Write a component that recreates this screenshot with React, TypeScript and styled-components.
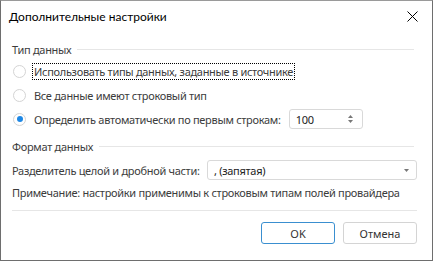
import React, {useState} from 'react';
import styled, {createGlobalStyle} from 'styled-components';

const GlobalStyle = createGlobalStyle`
  html, body {
    margin: 0;
    padding: 0;
    background: #fff;
  }
`;

const Window = styled.div`
  width: 433px;
  height: 261px;
  box-sizing: border-box;
  border: 1px solid #6e6e6e;
  border-top-color: #9a9a9a;
  background: #fff;
  display: flex;
  flex-direction: column;
  font-family: "Noto Sans", "Open Sans", sans-serif;
  font-size: 11px;
  letter-spacing: -0.3px;
  color: #3c3c3c;
  white-space: nowrap;
`;

const TitleBar = styled.div`
  height: 31px;
  display: flex;
  align-items: center;
  justify-content: space-between;
  padding: 0 14px 0 8px;
  color: #000;
  font-family: Lato, "Noto Sans", sans-serif;
  font-size: 12px;
  letter-spacing: 0;
`;

const Body = styled.div`
  flex: 1;
  display: flex;
  flex-direction: column;
  padding: 9px 15px 0 11px;
`;

const GroupHeader = styled.div<{$top?: number}>`
  display: flex;
  align-items: center;
  gap: 6px;
  height: 17px;
  margin-top: ${p => p.$top ?? 0}px;

  &::after {
    content: '';
    flex: 1;
    height: 1px;
    background: #e6e6e6;
    margin-right: 3px;
  }
`;

const Options = styled.div`
  display: flex;
  flex-direction: column;
  gap: 4px;
  margin-top: 3px;
`;

const Row = styled.div<{$top?: number}>`
  display: flex;
  align-items: center;
  height: 20px;
  margin-top: ${p => p.$top ?? 0}px;
`;

const Radio = styled.span<{$checked?: boolean}>`
  width: 11px;
  height: 11px;
  border-radius: 50%;
  border: 1px solid #d4d4d4;
  background: #fff;
  display: inline-flex;
  align-items: center;
  justify-content: center;
  margin-left: 1px;
  margin-right: 7px;
  flex: 0 0 auto;

  &::after {
    content: '';
    width: 6px;
    height: 6px;
    border-radius: 50%;
    background: ${p => (p.$checked ? '#1e88e5' : 'transparent')};
  }
`;

const Label = styled.span<{$focused?: boolean}>`
  outline: ${p => (p.$focused ? '1px dotted #000' : 'none')};
  padding: 0 1px;
  line-height: 15px;
`;

const Field = styled.div<{$w: number}>`
  width: ${p => p.$w}px;
  height: 20px;
  box-sizing: border-box;
  border: 1px solid #d9d9d9;
  border-radius: 3px;
  display: flex;
  align-items: center;
  justify-content: space-between;
  padding: 0 7px 0 6px;
  color: #222;
`;

const Arrows = styled.span`
  display: flex;
  flex-direction: column;
  gap: 2px;
  margin-right: 2px;
`;

const Note = styled.div`
  height: 24px;
  display: flex;
  align-items: center;
`;

const Separator = styled.div`
  height: 1px;
  background: #e6e6e6;
  margin-top: 6px;
`;

const Footer = styled.div`
  display: flex;
  justify-content: flex-end;
  gap: 8px;
  padding-top: 11px;
`;

const Button = styled.button<{$primary?: boolean}>`
  width: 74px;
  height: 22px;
  box-sizing: border-box;
  border: 1px solid ${p => (p.$primary ? '#3a8fd0' : '#d4d4d4')};
  border-radius: 3px;
  background: #fff;
  font: inherit;
  color: #333;
  padding: 0;
`;

const CloseIcon = () => (
  <svg width="11" height="11" viewBox="0 0 11 11">
    <path d="M0.5 0.5L10.5 10.5M10.5 0.5L0.5 10.5" stroke="#000" strokeWidth="1"/>
  </svg>
);

const Tri = ({up}: {up?: boolean}) => (
  <svg width="5" height="3" viewBox="0 0 5 3">
    <path d={up ? 'M0 3L2.5 0L5 3Z' : 'M0 0L2.5 3L5 0Z'} fill="#777"/>
  </svg>
);

const App = () => {
  const [mode] = useState(2);
  const options = [
    'Использовать типы данных, заданные в источнике',
    'Все данные имеют строковый тип',
    'Определить автоматически по первым строкам:'
  ];

  return (
    <Window>
      <GlobalStyle/>
      <TitleBar>
        <span>Дополнительные настройки</span>
        <CloseIcon/>
      </TitleBar>
      <Body>
        <GroupHeader>Тип данных</GroupHeader>
        <Options>
          {options.map((o, i) => (
            <Row key={i}>
              <Radio $checked={mode === i}/>
              <Label $focused={i === 0}>{o}</Label>
              {i === 2 && (
                <Field $w={74} style={{marginLeft: 7}}>
                  <span>100</span>
                  <Arrows><Tri up/><Tri/></Arrows>
                </Field>
              )}
            </Row>
          ))}
        </Options>
        <GroupHeader $top={9}>Формат данных</GroupHeader>
        <Row $top={5}>
          <span>Разделитель целой и дробной части:</span>
          <Field $w={210} style={{marginLeft: 'auto'}}>
            <span>, (запятая)</span>
            <Tri/>
          </Field>
        </Row>
        <Note>Примечание: настройки применимы к строковым типам полей провайдера</Note>
        <Separator/>
        <Footer>
          <Button $primary>OK</Button>
          <Button>Отмена</Button>
        </Footer>
      </Body>
    </Window>
  );
};

export default App;
